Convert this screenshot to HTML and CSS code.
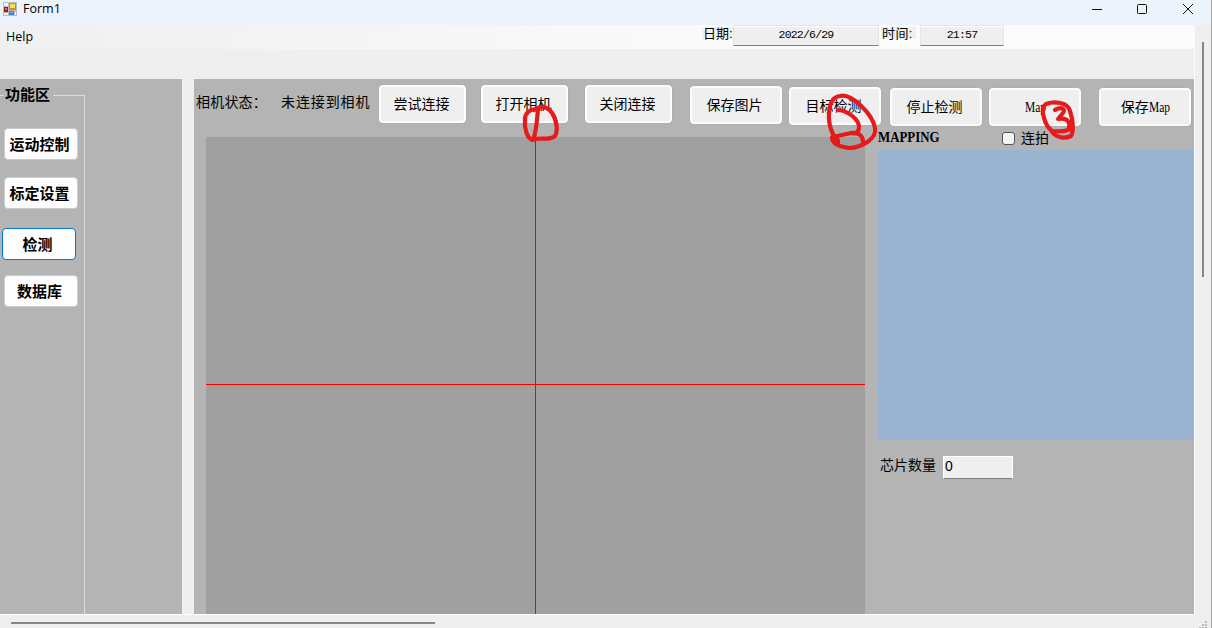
FILE: index.html
```html
<!DOCTYPE html>
<html lang="zh-CN">
<head>
<meta charset="utf-8">
<title>Form1</title>
<link rel="stylesheet" href="styles.css">
</head>
<body>
<div class="window">
  <header class="titlebar">
    <svg class="app-icon" width="14" height="14" viewBox="0 0 14 14">
      <path fill="#b9bcc2" d="M0 0h14v14H0z"/>
      <path fill="#f4f6fa" d="M1 1h4v3H1zM1 11h4v2H1zM12 10h1v3h-1z"/>
      <path fill="#a01818" d="M1 5h4v5H1z"/><path fill="#e86a60" d="M2 6h2v2H2z"/>
      <path fill="#c99414" d="M6 1h7v7H6z"/><path fill="#ffda55" d="M7 2h5v4H7z"/>
      <path fill="#4a7fd6" d="M6 9h5v4H6z"/><path fill="#86b0ee" d="M7 10h3v1H7z"/>
    </svg>
    <span class="title">Form1</span>
    <svg class="controls" width="104" height="12" viewBox="0 0 104 12" fill="none" stroke="#111">
      <path d="M0 5.5h10"/><rect x="45.5" y=".5" width="9" height="9" rx="1"/><path d="M91 0l10 10M101 0L91 10"/>
    </svg>
  </header>
  <div class="menubar">
    <span class="help">Help</span>
    <span class="caption date-caption">日期:</span>
    <span class="readout date">2022/6/29</span>
    <span class="caption time-caption">时间:</span>
    <span class="readout time">21:57</span>
  </div>
  <div class="body">
    <div class="client">
      <aside class="side">
        <fieldset class="group">
          <legend>功能区</legend>
          <button class="nav n1">运动控制</button>
          <button class="nav n2">标定设置</button>
          <button class="nav n3 active">检测</button>
          <button class="nav n4">数据库</button>
        </fieldset>
      </aside>
      <main class="main">
        <div class="toolbar">
          <span class="state">相机状态：</span>
          <span class="status">未连接到相机</span>
          <button class="tool connect">尝试连接</button>
          <button class="tool open">打开相机</button>
          <button class="tool close">关闭连接</button>
          <button class="tool wide save">保存图片</button>
          <button class="tool wide target">目标检测</button>
          <button class="tool wide stop">停止检测</button>
          <button class="tool wide map"><span class="latin">Map</span></button>
          <button class="tool wide save-map">保存<span class="latin">Map</span></button>
        </div>
        <div class="work">
          <div class="camera">
            <svg width="659" height="477" viewBox="0 0 659 477"><path class="v-axis" d="M329.5 0v477"/><path class="h-axis" d="M0 247.5h659"/></svg>
          </div>
          <section class="mapping">
            <div class="mapping-head">
              <span class="mapping-title">MAPPING</span>
              <span class="check"></span><span class="check-label">连拍</span>
            </div>
            <div class="map-view"></div>
            <div class="count"><span class="count-label">芯片数量</span><span class="count-value">0</span></div>
          </section>
        </div>
      </main>
    </div>
    <div class="vscroll"><div class="vthumb"></div></div>
  </div>
  <div class="hscroll"><div class="hthumb"></div>
    <svg class="grip" width="12" height="8" viewBox="0 0 12 8" fill="#b8b8b8"><path d="M6 0h2v2H6zM3 3h2v2H3zM6 3h2v2H6zM0 6h2v2H0zM3 6h2v2H3zM6 6h2v2H6z"/></svg>
  </div>
  <svg class="marks" width="1212" height="628" viewBox="0 0 1212 628">
    <path d="M537 109C530 109 525 113 525 119C524 128 527 139 533 140C536 134 537 121 538 109M534 110C542 105 548 107 552 113C557 120 558 131 555 136C551 140 543 138 533 139"/>
    <path d="M838 110C849 111 859 120 859 127C859 133 855 134 851 133L833 137C833 140 836 144 838 143C839 139 834 136 834 136C826 122 827 97 840 96C852 93 873 115 875 128C877 139 862 147 850 148C840 147 832 144 832 137M851 133C859 132 863 136 863 142"/>
    <path d="M1055 110C1061 106 1066 109 1063 113L1058 119C1069 117 1071 124 1068 130M1070 129C1063 133 1059 131 1052 131C1045 126 1039 108 1046 104C1054 101 1068 102 1070 111C1073 120 1074 131 1071 136C1065 139 1057 138 1052 132"/>
  </svg>
</div>
</body>
</html>
```
FILE: styles.css
```css
* { box-sizing: border-box; }
body { margin: 0; overflow: hidden; font-family: "Liberation Sans", "Noto Sans CJK SC", sans-serif; color: #000; }
button { padding: 0; font: inherit; color: inherit; }
svg { display: block; }
.window { position: relative; width: 1212px; height: 628px; display: flex; flex-direction: column; background: #efefef; border-right: 1px solid #aaa; }
.titlebar { flex: none; height: 25px; display: flex; background: #edf3fb; padding: 2px 15px 0 3px; }
.title { margin: -2px 0 0 6px; font: 12.5px/18px "Open Sans", sans-serif; }
.controls { margin: 2px 0 0 auto; }
.menubar { flex: none; height: 24px; width: 1195px; display: flex; align-items: flex-start; background: linear-gradient(90deg, #f0f0f0, #fbfbfb 65%); }
.help { width: 702px; padding-left: 6px; font: 12.5px/24px "Open Sans", sans-serif; }
.caption { height: 12px; margin-top: 2px; background: #f0f0f0; font: 13px/13px "Liberation Sans", "Noto Sans CJK SC", sans-serif; white-space: nowrap; }
.date-caption { width: 31px; padding-left: 1px; }
.time-caption { width: 35px; margin-left: 2px; padding-left: 1px; letter-spacing: .4px; }
.readout { height: 21px; border: 1px solid #e5e5e5; border-bottom-color: #808080; background: #efefef; text-align: center; font: 11.5px/18px "Liberation Mono", monospace; letter-spacing: -.8px; box-shadow: inset 0 1px #fff; }
.date { width: 146px; }
.time { width: 84px; margin-left: 4px; }
.body { height: 566px; display: flex; }
.client { width: 1195px; padding-top: 30px; display: flex; border: 0 solid #fff; border-width: 0 1px 1px 0; }
.side { width: 182px; margin-right: 12px; background: #b4b4b4; }
.group { width: 85px; height: 535px; margin: 0; padding: 0; border: 0; border-right: 1px solid #dcdcdc; min-width: 0; display: flow-root; background: linear-gradient(#dcdcdc, #dcdcdc) 0 16px / 100% 1px no-repeat; clip-path: polygon(0 0, 84px 0, 84px 16px, 85px 16px, 85px 100%, 0 100%); }
.group legend { float: left; height: 28px; width: 49px; margin: 0 0 21px 4px; padding: 0 0 0 1px; background: #b4b4b4; font: bold 15px/29px "Noto Sans CJK SC", sans-serif; white-space: nowrap; }
.nav { display: block; clear: both; width: 74px; height: 32px; margin-left: 4px; padding-right: 3px; border: 1px solid #ccc; border-radius: 4px; background: #fdfdfd; font: bold 15px/28px "Noto Sans CJK SC", sans-serif; }
.n2 { margin-top: 17px; }
.n3 { margin: 19px 0 0 2px; }
.n4 { margin-top: 15px; }
.active { border-color: #0078d4; }
.main { width: 1000px; background: #b4b4b4; }
.toolbar { height: 58px; display: flex; align-items: flex-start; padding-top: 6px; font: 14px/36px "Noto Sans CJK SC", sans-serif; white-space: nowrap; }
.state { width: 87px; padding-left: 2px; line-height: 32px; letter-spacing: .2px; }
.status { width: 98px; line-height: 32px; letter-spacing: .9px; }
.tool { flex: none; width: 87px; height: 38px; padding: 0 2px 2px 0; border: 2px solid #fdfdfd; border-radius: 4px; background: #efefef; box-shadow: 0 0 1px #888; line-height: 32px; }
.wide { width: 92px; padding-right: 3px; }
.open { margin-left: 15px; }
.close { margin-left: 17px; }
.save { margin: 1px 0 0 18px; }
.target { margin: 2px 0 0 7px; }
.stop { margin: 3px 0 0 9px; }
.map { margin: 3px 0 0 7px; padding: 0; }
.save-map { margin: 3px 0 0 18px; padding-right: 0; }
.latin { display: inline-block; margin-right: -5px; font-family: "Liberation Serif", serif; transform: scaleX(.82); transform-origin: left; }
.work { display: flex; padding-left: 12px; }
.camera { width: 659px; height: 477px; background: #a0a0a0; }
.h-axis { stroke: #f00; }
.v-axis { stroke: #f00; }
.mapping { width: 329px; padding-left: 13px; }
.mapping-head { height: 13px; display: flex; align-items: flex-start; }
.mapping-title { width: 124px; margin-top: -9px; font: bold 15px/18px "Liberation Serif", serif; transform: scaleX(.86); transform-origin: left; }
.check { width: 13px; height: 13px; margin-top: -5px; border: 1px solid #555; border-radius: 3px; background: #f4f4f4; }
.check-label { margin: -10px 0 0 6px; font: 14px/20px "Noto Sans CJK SC", sans-serif; }
.map-view { height: 290px; background: #99b3d1; }
.count { display: flex; margin: 16px 0 0 2px; font: 14px/18px "Noto Sans CJK SC", sans-serif; }
.count-label { margin-top: -1px; }
.count-value { width: 70px; height: 23px; margin-left: 7px; padding-left: 1px; border: 1px solid #fff; border-bottom-color: #808080; background: #efefef; font: 14px/19px "Liberation Sans", sans-serif; }
.vscroll { width: 16px; padding: 0 0 0 7px; }
.vthumb { width: 2px; height: 235px; margin-top: -7px; background: #868686; }
.hscroll { height: 13px; display: flex; justify-content: space-between; padding: 7px 0 0 11px; }
.hthumb { width: 424px; height: 2px; background: #868686; }
.grip { margin-top: -1px; }
.marks { position: absolute; left: 0; top: 0; fill: none; stroke: #e51b1b; stroke-width: 4.2; stroke-linecap: round; stroke-linejoin: round; pointer-events: none; }
```
